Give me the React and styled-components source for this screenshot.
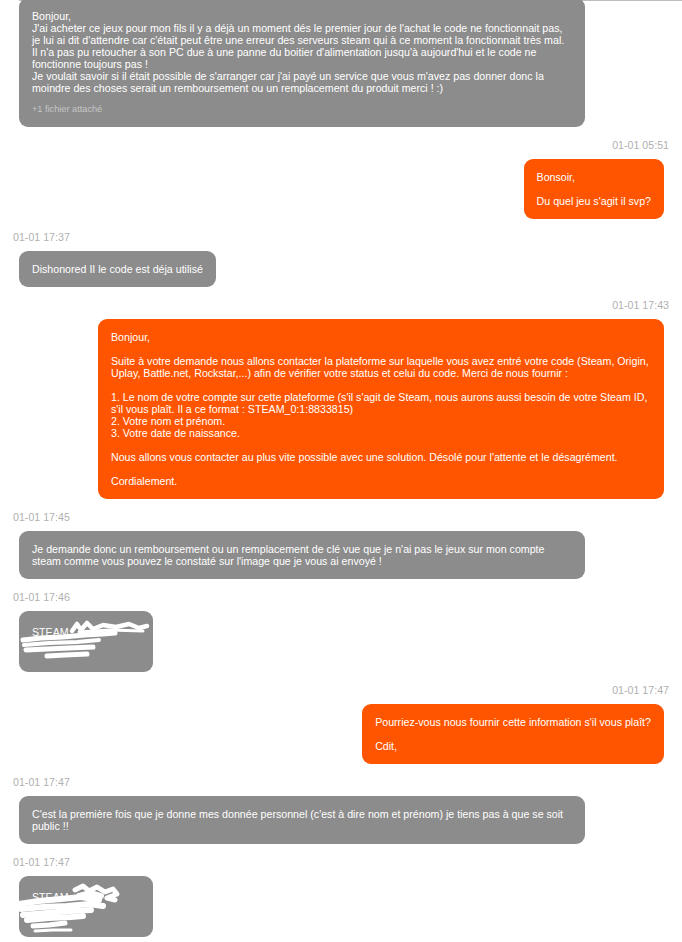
import styled, { createGlobalStyle } from 'styled-components';

const GlobalStyle = createGlobalStyle`
  html, body {
    margin: 0;
    padding: 0;
    background: #ffffff;
  }
  body {
    font-family: "Liberation Sans", Arial, sans-serif;
    font-size: 10.65px;
    line-height: 12px;
  }
`;

const Frame = styled.div`
  width: 682px;
  overflow: hidden;
`;

const TopRule = styled.div`
  height: 1px;
  margin-left: 19px;
  background: #bcbcbc;
`;

const Thread = styled.div`
  display: flex;
  flex-direction: column;
  gap: 12px;
  padding: 0 13px;
  margin-top: -3px;
`;

const Message = styled.div`
  display: flex;
  flex-direction: column;
  align-items: ${(p) => (p.$out ? 'flex-end' : 'flex-start')};
`;

const Stamp = styled.div`
  color: #b0b0b0;
  font-size: 10.65px;
  line-height: 12px;
  margin-bottom: 8px;
`;

const Bubble = styled.div`
  position: relative;
  max-width: 566px;
  box-sizing: border-box;
  padding: 12px 13px;
  margin: ${(p) => (p.$out ? '0 5px 0 0' : '0 0 0 6px')};
  border-radius: 9px;
  background: ${(p) => (p.$out ? '#ff5500' : '#8c8c8c')};
  color: #ffffff;
  white-space: pre-line;
`;

const Attachment = styled.div`
  margin-top: 9px;
  font-size: 9.2px;
  line-height: 12px;
  color: #c6c6c6;
`;

const Shot = styled(Bubble)`
  width: 134px;
  height: 61px;
  padding-top: 15px;
  overflow: visible;
`;

const Scribble = styled.svg`
  position: absolute;
  left: 0;
  top: 0;
  overflow: visible;
  pointer-events: none;
`;

const ScribbleA = () => (
  <Scribble width="134" height="61" viewBox="0 0 134 61">
    <g fill="none" stroke="#fff" strokeLinecap="round" strokeLinejoin="round">
      <path d="M53 20 L58 13 L62 19 L68 12 L74 18 L84 14 L97 16 L110 13 L120 17 L128 15" strokeWidth="4.5" />
      <path d="M60 21 L90 19 L124 20" strokeWidth="3" />
      <path d="M4 29 L22 27 L44 26 L66 24 L84 23 L96 22" strokeWidth="5" />
      <path d="M5 34 L30 32 L58 31 L80 29" strokeWidth="4" />
      <path d="M7 39 L28 38 L50 37 L74 36" strokeWidth="5" />
      <path d="M28 45 L46 44 L68 43" strokeWidth="5" />
    </g>
  </Scribble>
);

const ScribbleB = () => (
  <Scribble width="134" height="61" viewBox="0 0 134 61">
    <g fill="none" stroke="#fff" strokeLinecap="round" strokeLinejoin="round">
      <path d="M56 14 L64 10 L70 15 L78 11 L86 16 L94 13 L98 18 L88 22 L96 24" strokeWidth="5" />
      <path d="M60 20 L72 17 L82 20" strokeWidth="6" />
      <path d="M0 28 L20 25 L42 23 L62 21 L80 24" strokeWidth="6" />
      <path d="M2 33 L24 31 L48 30 L70 28 L84 30" strokeWidth="6" />
      <path d="M4 39 L28 37 L52 35 L72 34" strokeWidth="6" />
      <path d="M8 44 L30 42 L52 41 L64 40" strokeWidth="6" />
      <path d="M14 50 L30 49 L46 47" strokeWidth="5" />
      <path d="M16 55 L34 54 L52 54" strokeWidth="3" />
    </g>
  </Scribble>
);

const firstMessage = `Bonjour,
J'ai acheter ce jeux pour mon fils il y a déjà un moment dés le premier jour de l'achat le code ne fonctionnait pas,
je lui ai dit d'attendre car c'était peut être une erreur des serveurs steam qui à ce moment la fonctionnait très mal.
Il n'a pas pu retoucher à son PC due à une panne du boitier d'alimentation jusqu'à aujourd'hui et le code ne fonctionne toujours pas !
Je voulait savoir si il était possible de s'arranger car j'ai payé un service que vous m'avez pas donner donc la moindre des choses serait un remboursement ou un remplacement du produit merci ! :)`;

const supportReply = `Bonjour,

Suite à votre demande nous allons contacter la plateforme sur laquelle vous avez entré votre code (Steam, Origin, Uplay, Battle.net, Rockstar,...) afin de vérifier votre status et celui du code. Merci de nous fournir :

1. Le nom de votre compte sur cette plateforme (s'il s'agit de Steam, nous aurons aussi besoin de votre Steam ID, s'il vous plaît. Il a ce format : STEAM_0:1:8833815)
2. Votre nom et prénom.
3. Votre date de naissance.

Nous allons vous contacter au plus vite possible avec une solution. Désolé pour l'attente et le désagrément.

Cordialement.`;

const App = () => {
  return (
    <>
      <GlobalStyle />
      <Frame>
        <TopRule />
        <Thread>
          <Message>
            <Bubble>
              {firstMessage}
              <Attachment>+1 fichier attaché</Attachment>
            </Bubble>
          </Message>

          <Message $out>
            <Stamp>01-01 05:51</Stamp>
            <Bubble $out>{'Bonsoir,\n\nDu quel jeu s\'agit il svp?'}</Bubble>
          </Message>

          <Message>
            <Stamp>01-01 17:37</Stamp>
            <Bubble>Dishonored II le code est déja utilisé</Bubble>
          </Message>

          <Message $out>
            <Stamp>01-01 17:43</Stamp>
            <Bubble $out>{supportReply}</Bubble>
          </Message>

          <Message>
            <Stamp>01-01 17:45</Stamp>
            <Bubble>
              Je demande donc un remboursement ou un remplacement de clé vue que je n'ai pas le jeux sur mon compte steam comme vous pouvez le constaté sur l'image que je vous ai envoyé !
            </Bubble>
          </Message>

          <Message>
            <Stamp>01-01 17:46</Stamp>
            <Shot>
              STEAM
              <ScribbleA />
            </Shot>
          </Message>

          <Message $out>
            <Stamp>01-01 17:47</Stamp>
            <Bubble $out>{'Pourriez-vous nous fournir cette information s\'il vous plaît?\n\nCdit,'}</Bubble>
          </Message>

          <Message>
            <Stamp>01-01 17:47</Stamp>
            <Bubble>
              C'est la première fois que je donne mes donnée personnel (c'est à dire nom et prénom) je tiens pas à que se soit public !!
            </Bubble>
          </Message>

          <Message>
            <Stamp>01-01 17:47</Stamp>
            <Shot>
              STEAM
              <ScribbleB />
            </Shot>
          </Message>
        </Thread>
      </Frame>
    </>
  );
};

export default App;
